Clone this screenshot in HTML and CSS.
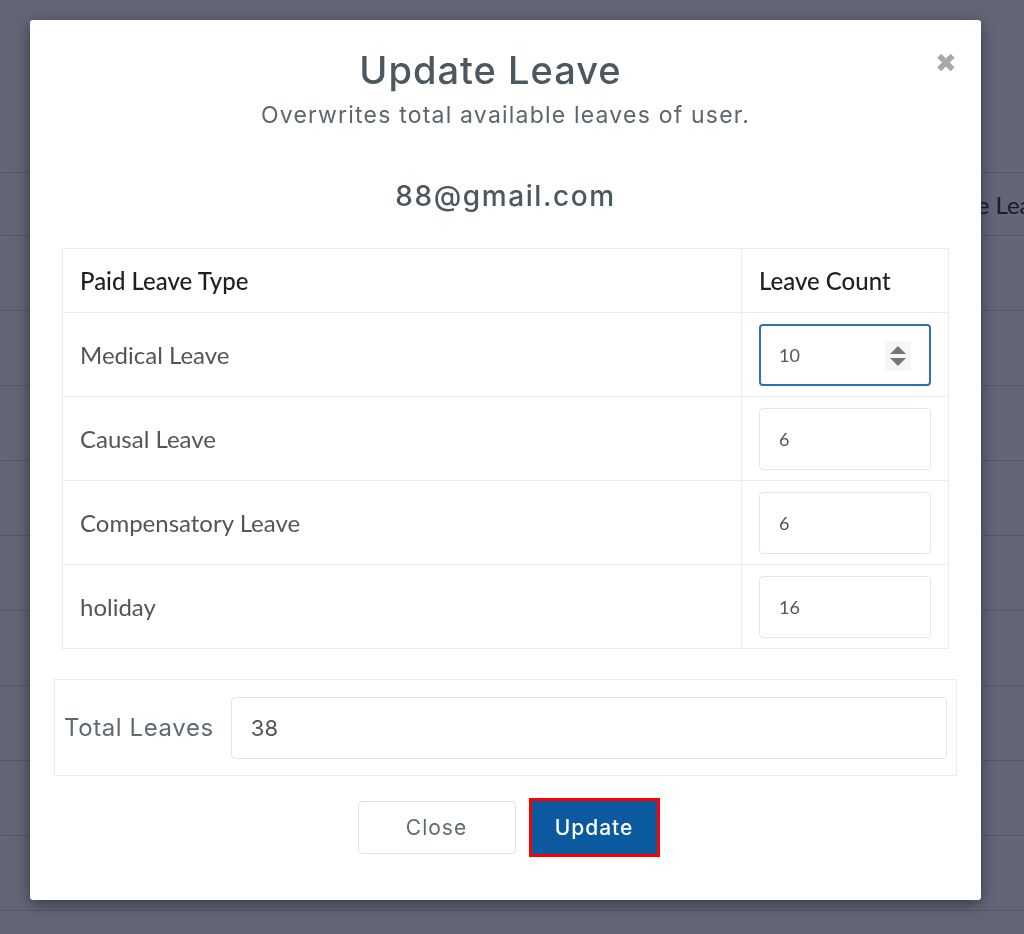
FILE: index.html
```html
<!DOCTYPE html>
<html lang="en">
<head>
    <meta charset="UTF-8">
    <meta name="viewport" content="width=device-width, initial-scale=1.0">
    <title>Leave Management</title>
    <link rel="stylesheet" href="styles.css">
</head>
<body>
    <!-- page behind the dialog -->
    <div class="page">
        <div class="page-row page-head">
            <span>Email</span>
            <span>Update Leave</span>
        </div>
        <div class="page-row"></div>
        <div class="page-row"></div>
        <div class="page-row"></div>
        <div class="page-row"></div>
        <div class="page-row"></div>
        <div class="page-row"></div>
        <div class="page-row"></div>
        <div class="page-row"></div>
        <div class="page-row"></div>
        <div class="page-row"></div>
    </div>

    <div class="backdrop"></div>

    <div class="modal">
        <button class="close-x" type="button">&#10006;</button>
        <div class="modal-header">
            <h1>Update Leave</h1>
            <p>Overwrites total available leaves of user.</p>
        </div>

        <div class="user-email">88@gmail.com</div>

        <div class="table-wrap">
            <table class="leave-table">
                <thead>
                    <tr>
                        <th>Paid Leave Type</th>
                        <th class="count-col">Leave Count</th>
                    </tr>
                </thead>
                <tbody>
                    <tr>
                        <td>Medical Leave</td>
                        <td class="count-col">
                            <div class="num-field focused">
                                <input type="text" value="10">
                                <span class="spinner">
                                    <svg width="20" height="26" viewBox="0 0 20 26">
                                        <path d="M2 11 L10 3 L18 11 Z" fill="#777"/>
                                        <path d="M2 15 L10 23 L18 15 Z" fill="#777"/>
                                    </svg>
                                </span>
                            </div>
                        </td>
                    </tr>
                    <tr>
                        <td>Causal Leave</td>
                        <td class="count-col"><div class="num-field"><input type="text" value="6"></div></td>
                    </tr>
                    <tr>
                        <td>Compensatory Leave</td>
                        <td class="count-col"><div class="num-field"><input type="text" value="6"></div></td>
                    </tr>
                    <tr>
                        <td>holiday</td>
                        <td class="count-col"><div class="num-field"><input type="text" value="16"></div></td>
                    </tr>
                </tbody>
            </table>
        </div>

        <div class="total-box">
            <label>Total Leaves</label>
            <input type="text" value="38">
        </div>

        <div class="modal-footer">
            <button class="btn btn-close" type="button">Close</button>
            <button class="btn btn-update" type="button">Update</button>
        </div>
    </div>
</body>
</html>
```

FILE: styles.css
```css
body {
    margin: 0;
    padding: 0;
    background: #fff;
    font-family: Lato, "Liberation Sans", sans-serif;
    overflow: hidden;
}

/* background listing */
.page {
    height: 100vh;
    overflow: hidden;
    padding-top: 172px;
    box-sizing: border-box;
}
.page-row {
    height: 74px;
    border-top: 1px solid #d8d8d8;
}
.page-head {
    height: 62px;
    display: flex;
    justify-content: space-between;
    align-items: center;
    padding: 0 0 0 80px;
    font-size: 24px;
    color: #333;
    margin-right: -32px;
}
.backdrop {
    position: fixed;
    inset: 0;
    background: rgba(10, 15, 42, 0.64);
}

/* dialog */
.modal {
    position: fixed;
    left: 30px;
    top: 20px;
    width: 951px;
    height: 880px;
    background: #fff;
    border-radius: 3px;
    box-shadow: 0 4px 16px rgba(0, 0, 0, 0.45);
    box-sizing: border-box;
    font-family: Inter, "Noto Sans", sans-serif;
}
.close-x {
    position: absolute;
    top: 28px;
    right: 24px;
    border: none;
    background: none;
    padding: 0;
    font-size: 26px;
    line-height: 30px;
    color: #a9a9a9;
    cursor: pointer;
}
.modal-header {
    text-align: center;
    padding-top: 28px;
}
.modal-header h1 {
    margin: 0;
    padding-right: 30px;
    font-size: 38px;
    line-height: 44px;
    font-weight: 500;
    letter-spacing: 1px;
    color: #4c575e;
}
.modal-header p {
    margin: 8px 0 0;
    font-size: 23px;
    line-height: 30px;
    letter-spacing: 1.2px;
    color: #5b666d;
}
.user-email {
    text-align: center;
    margin-top: 49px;
    font-size: 28px;
    line-height: 34px;
    font-weight: 500;
    letter-spacing: 1.6px;
    color: #4c575e;
}

.table-wrap {
    padding: 0 32px;
    margin-top: 35px;
}
.leave-table {
    width: 100%;
    border-collapse: collapse;
    font-family: Lato, "Liberation Sans", sans-serif;
}
.leave-table th,
.leave-table td {
    border: 1px solid #e8eef0;
    text-align: left;
    padding: 0 17px;
}
.leave-table th {
    height: 63px;
    font-size: 24px;
    font-weight: 500;
    color: #1f1f1f;
}
.leave-table td {
    height: 83px;
    font-size: 24px;
    color: #555;
}
.leave-table .count-col {
    width: 172px;
}
.num-field {
    position: relative;
}
.num-field input,
.total-box input {
    display: block;
    width: 100%;
    box-sizing: border-box;
    height: 62px;
    border: 1px solid #e3e6e8;
    border-radius: 4px;
    padding: 0 19px;
    font-family: Lato, "Liberation Sans", sans-serif;
    font-size: 18px;
    color: #555;
    outline: none;
}
.num-field.focused input {
    border: 2px solid #2c72b5;
    padding-left: 18px;
}
.spinner {
    position: absolute;
    right: 20px;
    top: 17px;
    width: 26px;
    height: 30px;
    background: #f6f6f6;
    display: flex;
    align-items: center;
    justify-content: center;
}

.total-box {
    margin: 30px 24px 0;
    border: 1px solid #e8eef0;
    height: 97px;
    box-sizing: border-box;
    display: flex;
    align-items: center;
    padding: 0 9px;
    gap: 17px;
}
.total-box label {
    font-size: 24px;
    letter-spacing: 0.6px;
    color: #5f6b72;
    white-space: nowrap;
}
.total-box input {
    flex: 1;
    font-size: 22px;
    font-family: Inter, "Noto Sans", sans-serif;
}

.modal-footer {
    display: flex;
    justify-content: center;
    gap: 16px;
    margin-top: 25px;
    padding-left: 3px;
}
.btn {
    height: 53px;
    border-radius: 4px;
    font-family: Inter, "Noto Sans", sans-serif;
    font-size: 21px;
    letter-spacing: 1px;
    cursor: pointer;
}
.btn-close {
    width: 158px;
    background: #fff;
    border: 1px solid #dfe3e6;
    color: #5f6b72;
}
.btn-update {
    width: 125px;
    background: #0b5a9f;
    border: none;
    border-radius: 0;
    color: #fff;
    font-weight: 500;
    outline: 3px solid #f00;
}
```
